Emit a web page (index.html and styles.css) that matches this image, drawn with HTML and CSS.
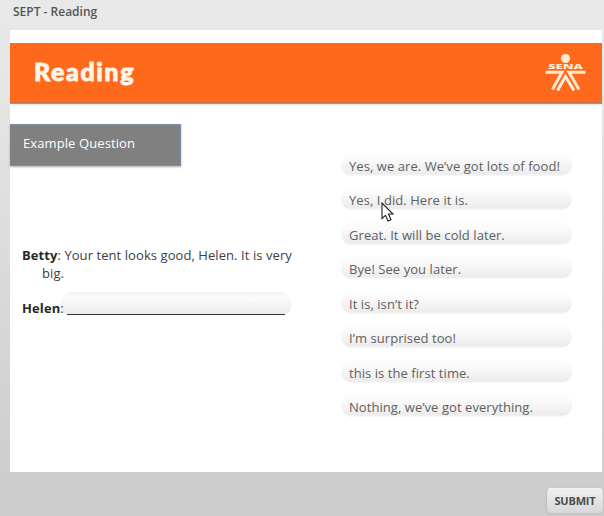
FILE: index.html
```html
<!DOCTYPE html>
<html lang="en">
<head>
<meta charset="utf-8">
<title>SEPT - Reading</title>
<link rel="stylesheet" href="styles.css">
</head>
<body>
<header class="topbar">SEPT - Reading</header>
<main class="slide">
  <div class="banner">
    <h1>Reading</h1>
    <svg class="logo" width="42" height="42" viewBox="0 0 42 42" role="img" aria-label="SENA">
      <circle cx="20.500" cy="6.500" r="4.600"/>
      <text x="3" y="17.300" textLength="35" lengthAdjust="spacingAndGlyphs">SENA</text>
      <path d="M0.500 20.300H17L7.500 37.500M40.500 20.300H24L34 37.500"/>
      <path d="M12.500 38.500L20.500 24.500L29 38.500"/>
    </svg>
  </div>
  <div class="content">
    <section class="question">
      <h2 class="tag">Example Question</h2>
      <p class="line betty"><b>Betty</b>: Your tent looks good, Helen. It is very big.</p>
      <div class="line helen"><span class="name"><b>Helen</b>:</span><span class="drop"><span class="rule"></span></span></div>
    </section>
    <ul class="answers">
      <li>Yes, we are. We’ve got lots of food!</li>
      <li>Yes, I did. Here it is.</li>
      <li>Great. It will be cold later.</li>
      <li>Bye! See you later.</li>
      <li>It is, isn’t it?</li>
      <li>I’m surprised too!</li>
      <li>this is the first time.</li>
      <li>Nothing, we’ve got everything.</li>
    </ul>
  </div>
</main>
<footer class="footer"><button class="submit">SUBMIT</button></footer>
<svg class="cursor" width="14" height="21" viewBox="0 0 14 21"><path d="M1 1V16.500L4.500 13.300L7 19L10 17.700L7.500 12H12Z"/></svg>
</body>
</html>
```
FILE: styles.css
```css
* { box-sizing: border-box; }
body {
  margin: 0;
  width: 604px;
  height: 516px;
  overflow: hidden;
  position: relative;
  font-family: "Open Sans", sans-serif;
  background: linear-gradient(#e9e9e9 0, #e5e5e5 100px, #cdcdcd 480px, #cccccc 516px);
}
.topbar {
  height: 30px;
  padding: 3px 0 0 13px;
  font-size: 12px;
  line-height: 18px;
  font-weight: 600;
  color: #555;
}
.slide {
  width: 592px;
  height: 442px;
  margin-left: 10px;
  padding-top: 13px;
  background: #fff;
}
.banner {
  height: 60px;
  display: flex;
  justify-content: space-between;
  padding: 9px 15px 0 24px;
  background: #ff691b;
  box-shadow: inset 0 1px #df713b, inset 0 -1px #bd7650, 0 1px #a99184, 0 2px 2px #ddd;
}
.banner h1 {
  margin: 0;
  font: 900 25px/38px Lato, sans-serif;
  letter-spacing: 1.6px;
  color: #fff4e5;
  -webkit-text-stroke: 0.9px #fff4e5;
}
.logo { fill: #ffead2; }
.logo text { font: 800 7.5px "Open Sans", sans-serif; }
.logo path { fill: none; stroke: #ffead2; stroke-width: 3; }
.content { display: flex; }
.question { width: 331px; padding-top: 21px; }
.tag {
  width: 171px;
  height: 42px;
  margin: 0;
  padding: 8px 12px 0 13px;
  background: #808080;
  border: 1px solid #7890ab;
  border-left-width: 0;
  box-shadow: 0 1px 2px #aaa;
  color: #fff;
  font-size: 13px;
  line-height: 20px;
  font-weight: 400;
  letter-spacing: 0.1px;
}
.line { font-size: 13px; line-height: 18px; color: #404040; }
.line b { color: #292929; }
.betty {
  width: 290px;
  margin: 80px 0 0 12px;
  padding-left: 20px;
  text-indent: -20px;
  letter-spacing: 0.07px;
}
.helen { display: flex; margin: 10px 0 0 12px; }
.name { position: relative; z-index: 1; width: 38px; padding-top: 7px; white-space: nowrap; letter-spacing: 0.1px; }
.drop {
  width: 232px;
  height: 24px;
  padding: 22px 0 0 7px;
  border-radius: 12px;
  background: linear-gradient(#f1f1f1, #fbfbfb 25%, #ebebeb 92%, #fff);
}
.rule { display: block; width: 218px; height: 1px; background: #333; }
.answers {
  list-style: none;
  margin: 50px 0 0;
  padding: 0;
  display: grid;
  grid-auto-rows: 34.45px;
}
.answers li {
  width: 231px;
  height: 23px;
  padding-left: 8px;
  border-radius: 12px;
  background: linear-gradient(#fdfdfd, #fafafa 30%, #ececec 90%, #f8f8f8);
  font-size: 13px;
  line-height: 26px;
  letter-spacing: 0.06px;
  color: #606060;
  white-space: nowrap;
}
.footer { display: flex; justify-content: flex-end; padding-top: 16px; }
.submit {
  width: 58px;
  height: 26px;
  padding: 0;
  border: 1px solid #c0c0c0;
  border-top-color: #f4f4f4;
  border-radius: 5px;
  background: linear-gradient(#efefef, #d8d8d8);
  box-shadow: 0 0 1px #aaa;
  font: 700 11px/20px "Open Sans", sans-serif;
  letter-spacing: -0.2px;
  color: #4a4a4a;
}
.cursor { position: absolute; left: 381px; top: 202px; fill: #fff; stroke: #222; stroke-width: 1.1; }
```
